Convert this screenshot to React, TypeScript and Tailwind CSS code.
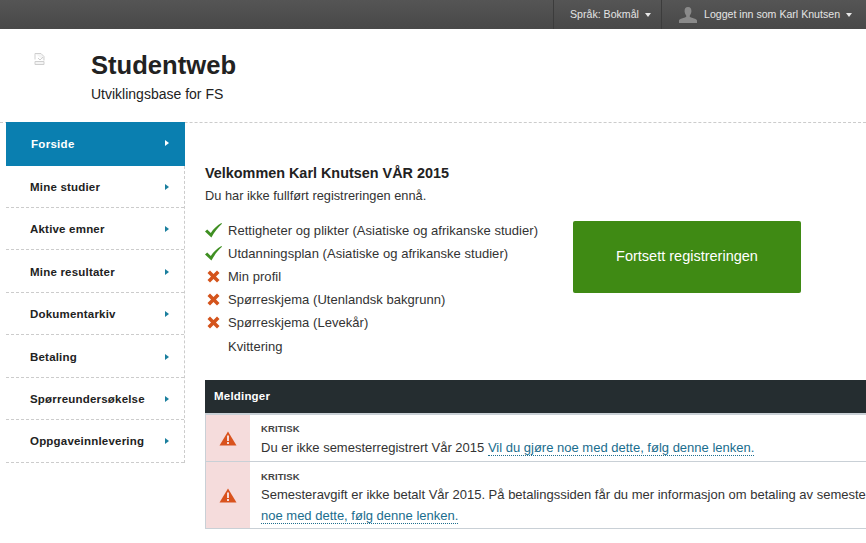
const menu = [
  { label: "Mine studier", h: "h-[42px] pt-[2px]" },
  { label: "Aktive emner", h: "h-[42px] pt-[2px]" },
  { label: "Mine resultater", h: "h-[43px] pt-[3px]" },
  { label: "Dokumentarkiv", h: "h-[42px] pt-[2px]" },
  { label: "Betaling", h: "h-[43px] pt-[3px]" },
  { label: "Spørreundersøkelse", h: "h-[42px] pt-[2px]" },
  { label: "Oppgaveinnlevering", h: "h-[43px] pt-[2px]" },
];

const steps = [
  { label: "Rettigheter og plikter (Asiatiske og afrikanske studier)", ok: true, h: "h-[23px]" },
  { label: "Utdanningsplan (Asiatiske og afrikanske studier)", ok: true, h: "h-[23px]" },
  { label: "Min profil", ok: false, h: "h-[23px]" },
  { label: "Spørreskjema (Utenlandsk bakgrunn)", ok: false, h: "h-[23px]" },
  { label: "Spørreskjema (Levekår)", ok: false, h: "h-[23px]" },
  { label: "Kvittering", ok: null, h: "mt-px h-[23px]" },
];

const Caret = () => (
  <span className="ml-[6px] inline-block h-0 w-0 border-x-[3px] border-t-[4px] border-x-transparent border-t-[#e8e8e8]" />
);

const Tick = () => (
  <svg width="17" height="15" viewBox="0 0 17 15">
    <path d="M0 8.5 L2.2 6.4 L5.8 10 C8.4 6 12 2.6 16.4 0 L17 0.8 C12.8 4.4 9.4 9 6.4 14.6 Z" fill="#3f8f22" />
  </svg>
);

const Cross = () => (
  <svg width="13" height="13" viewBox="0 0 13 13">
    <path d="M0.5 3 L3 0.5 L6.5 4 L10 0.5 L12.5 3 L9 6.5 L12.5 10 L10 12.5 L6.5 9 L3 12.5 L0.5 10 L4 6.5 Z" fill="#d4541c" />
  </svg>
);

const Warning = () => (
  <svg width="18" height="15" viewBox="0 0 18 15">
    <path d="M9 0.5 L17.5 14.5 L0.5 14.5 Z" fill="#d9531e" />
    <rect x="8" y="4.5" width="2" height="5.5" fill="#f6dcdc" />
    <rect x="8" y="11" width="2" height="2" fill="#f6dcdc" />
  </svg>
);

const App = () => {
  return (
    <div className="h-[543px] w-[866px] overflow-hidden bg-white font-['Liberation_Sans',Arial,sans-serif] text-[#333]">
      {/* Top bar */}
      <div className="flex h-[29px] justify-end bg-gradient-to-b from-[#555] to-[#484848] text-[10.6px] text-[#e4e4e4]">
        <div className="flex w-[108px] shrink-0 items-center border-l border-[#3c3c3c] pl-[16px]">
          Språk: Bokmål
          <Caret />
        </div>
        <div className="flex w-[205px] shrink-0 items-center border-l border-[#3c3c3c] pl-[17px]">
          <svg width="18" height="16" viewBox="0 0 18 16" className="mr-[7px]">
            <path d="M9 0 C6.4 0 5.4 2 5.6 4.4 C5.8 6.4 6.6 7.6 7.2 8.4 L7.2 10 C5 11 0.6 11.6 0 13.4 L0 16 L18 16 L18 13.4 C17.4 11.6 13 11 10.8 10 L10.8 8.4 C11.4 7.6 12.2 6.4 12.4 4.4 C12.6 2 11.6 0 9 0 Z" fill="#8a8a8a" />
          </svg>
          Logget inn som Karl Knutsen
          <Caret />
        </div>
      </div>

      {/* Header */}
      <header className="flex h-[93px] pl-[34px]">
        <svg width="11" height="12" viewBox="0 0 11 12" className="mt-[24px]">
          <path d="M1 .5h6l3 3v4M1 .5v6M1 8.5h9v3H1z" fill="#f4f4f4" stroke="#cfcfcf" strokeWidth="1" />
          <path d="M4 5l2 2 3-3" fill="none" stroke="#cfcfcf" />
        </svg>
        <div className="ml-[46px] pt-[20px]">
          <h1 className="text-[25.6px] font-bold leading-[32px] text-[#222]">Studentweb</h1>
          <p className="mt-[4px] text-[14px] leading-[18px] text-[#222]">Utviklingsbase for FS</p>
        </div>
      </header>

      <div className="flex border-t border-dashed border-[#ccc] pl-[6px]">
        {/* Sidebar */}
        <nav className="-mt-px w-[179px] shrink-0">
          <div className="flex h-[44px] items-center justify-between bg-[#0a7fb0] pl-[25px] pr-[16px] pt-[2px] text-[11.5px] font-bold tracking-[0.3px] text-white">
            Forside
            <span className="-mt-[4px] h-0 w-0 border-y-[3.5px] border-l-[4px] border-y-transparent border-l-white" />
          </div>
          <ul className="border-r border-dashed border-[#ccc]">
            {menu.map((item) => (
              <li
                key={item.label}
                className={`flex items-center justify-between border-b border-dashed border-[#ccc] pl-[24px] pr-[15px] text-[11.5px] font-bold tracking-[0.2px] text-[#222] ${item.h}`}
              >
                {item.label}
                <span className="-mt-[2px] h-0 w-0 border-y-[3.5px] border-l-[4px] border-y-transparent border-l-[#1b7f9e]" />
              </li>
            ))}
          </ul>
        </nav>

        {/* Main */}
        <main className="w-[900px] shrink-0 pl-[20px] pt-[41px]">
          <h2 className="text-[14.4px] font-bold leading-[18px] text-[#222]">Velkommen Karl Knutsen VÅR 2015</h2>
          <p className="mt-[6px] text-[12.8px] leading-[16px] text-[#333]">Du har ikke fullført registreringen ennå.</p>

          <div className="mt-[15px] flex">
            <ul className="w-[368px] shrink-0">
              {steps.map((step) => (
                <li key={step.label} className={`flex items-center text-[13px] tracking-[0.04px] ${step.h}`}>
                  <span className="flex w-[23px] shrink-0 items-center">
                    {step.ok === true && <Tick />}
                    {step.ok === false && <span className="ml-[2px] flex"><Cross /></span>}
                  </span>
                  {step.label}
                </li>
              ))}
            </ul>
            <button className="mt-[2px] h-[72px] w-[228px] rounded-[2px] bg-[#3f8a14] text-[14.5px] text-white">
              Fortsett registreringen
            </button>
          </div>

          <section className="mt-[22px]">
            <h3 className="flex h-[33px] items-center bg-[#252d30] pl-[9px] text-[11.5px] font-bold tracking-[0.2px] text-white">Meldinger</h3>
            <div className="border-x border-b border-t-[2px] border-[#c9d0d6]">
              <div className="flex border-b border-[#c9d0d6]">
                <div className="flex w-[44px] shrink-0 items-center justify-center bg-[#f5dcdc]">
                  <Warning />
                </div>
                <div className="pb-[3px] pl-[11px] pt-[8px]">
                  <div className="text-[9.5px] font-bold leading-[12px] tracking-[0.1px] text-[#444]">KRITISK</div>
                  <p className="mt-[2px] text-[13px] leading-[21px]">
                    Du er ikke semesterregistrert Vår 2015{" "}
                    <a className="border-b border-dotted border-[#1f6f8f] text-[#1a6d8e]">Vil du gjøre noe med dette, følg denne lenken.</a>
                  </p>
                </div>
              </div>
              <div className="flex">
                <div className="flex w-[44px] shrink-0 items-center justify-center bg-[#f5dcdc]">
                  <Warning />
                </div>
                <div className="w-[730px] pb-[2px] pl-[11px] pt-[9px]">
                  <div className="text-[9.5px] font-bold leading-[12px] tracking-[0.1px] text-[#444]">KRITISK</div>
                  <p className="mt-[1px] text-[13px] leading-[21px]">
                    Semesteravgift er ikke betalt Vår 2015. På betalingssiden får du mer informasjon om betaling av semesteravgift.{" "}
                    <a className="border-b border-dotted border-[#1f6f8f] text-[#1a6d8e]">Vil du gjøre noe med dette, følg denne lenken.</a>
                  </p>
                </div>
              </div>
            </div>
          </section>
        </main>
      </div>
    </div>
  );
};

export default App;
